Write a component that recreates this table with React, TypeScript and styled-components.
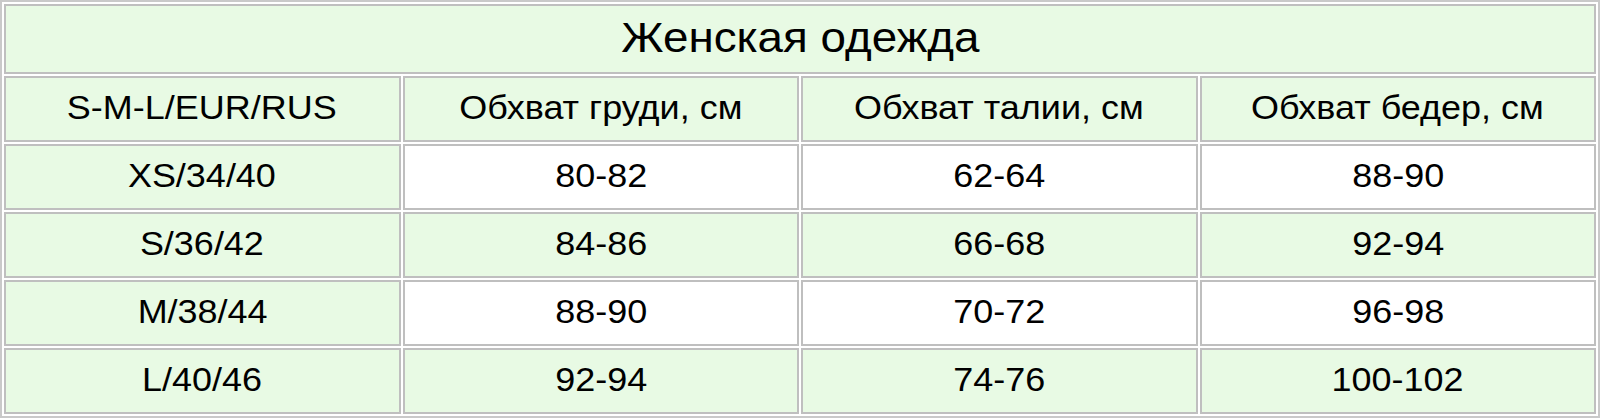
import React from 'react';
import styled, { createGlobalStyle } from 'styled-components';

const GlobalStyle = createGlobalStyle`
  html, body {
    margin: 0;
    padding: 0;
    background: #ffffff;
  }
  body {
    font-family: "Liberation Sans", Arial, sans-serif;
    color: #000;
  }
`;

const Table = styled.table`
  width: 1600px;
  table-layout: fixed;
  border-collapse: separate;
  border-spacing: 2px;
  border: 2px solid #c9c9c9;
  font-family: "Liberation Sans", Arial, sans-serif;
`;

const Cell = styled.td<{ $white?: boolean }>`
  box-sizing: border-box;
  height: 66px;
  padding: 0 4px 2px;
  border: 2px solid #bfbfbf;
  background: ${(p) => (p.$white ? '#ffffff' : '#e8fae4')};
  text-align: center;
  vertical-align: middle;
  font-size: 33px;
  color: #000;
`;

const TitleCell = styled(Cell)`
  height: 70px;
  font-size: 42px;
`;

// the glyphs in the original are a touch wider than Liberation Sans
const Text = styled.span`
  display: inline-block;
  white-space: nowrap;
  transform: scaleX(1.09);
`;

const sizes = [
  ['XS/34/40', '80-82', '62-64', '88-90'],
  ['S/36/42', '84-86', '66-68', '92-94'],
  ['M/38/44', '88-90', '70-72', '96-98'],
  ['L/40/46', '92-94', '74-76', '100-102'],
];

const headers = ['S-M-L/EUR/RUS', 'Обхват груди, см', 'Обхват талии, см', 'Обхват бедер, см'];

export default function App() {
  return (
    <>
      <GlobalStyle />
      <Table>
        <tbody>
          <tr>
            <TitleCell colSpan={4}>
              <Text>Женская одежда</Text>
            </TitleCell>
          </tr>
          <tr>
            {headers.map((h) => (
              <Cell key={h}>
                <Text>{h}</Text>
              </Cell>
            ))}
          </tr>
          {sizes.map((row, i) => (
            <tr key={row[0]}>
              {row.map((v, j) => (
                <Cell key={j} $white={j > 0 && i % 2 === 0}>
                  <Text>{v}</Text>
                </Cell>
              ))}
            </tr>
          ))}
        </tbody>
      </Table>
    </>
  );
}
